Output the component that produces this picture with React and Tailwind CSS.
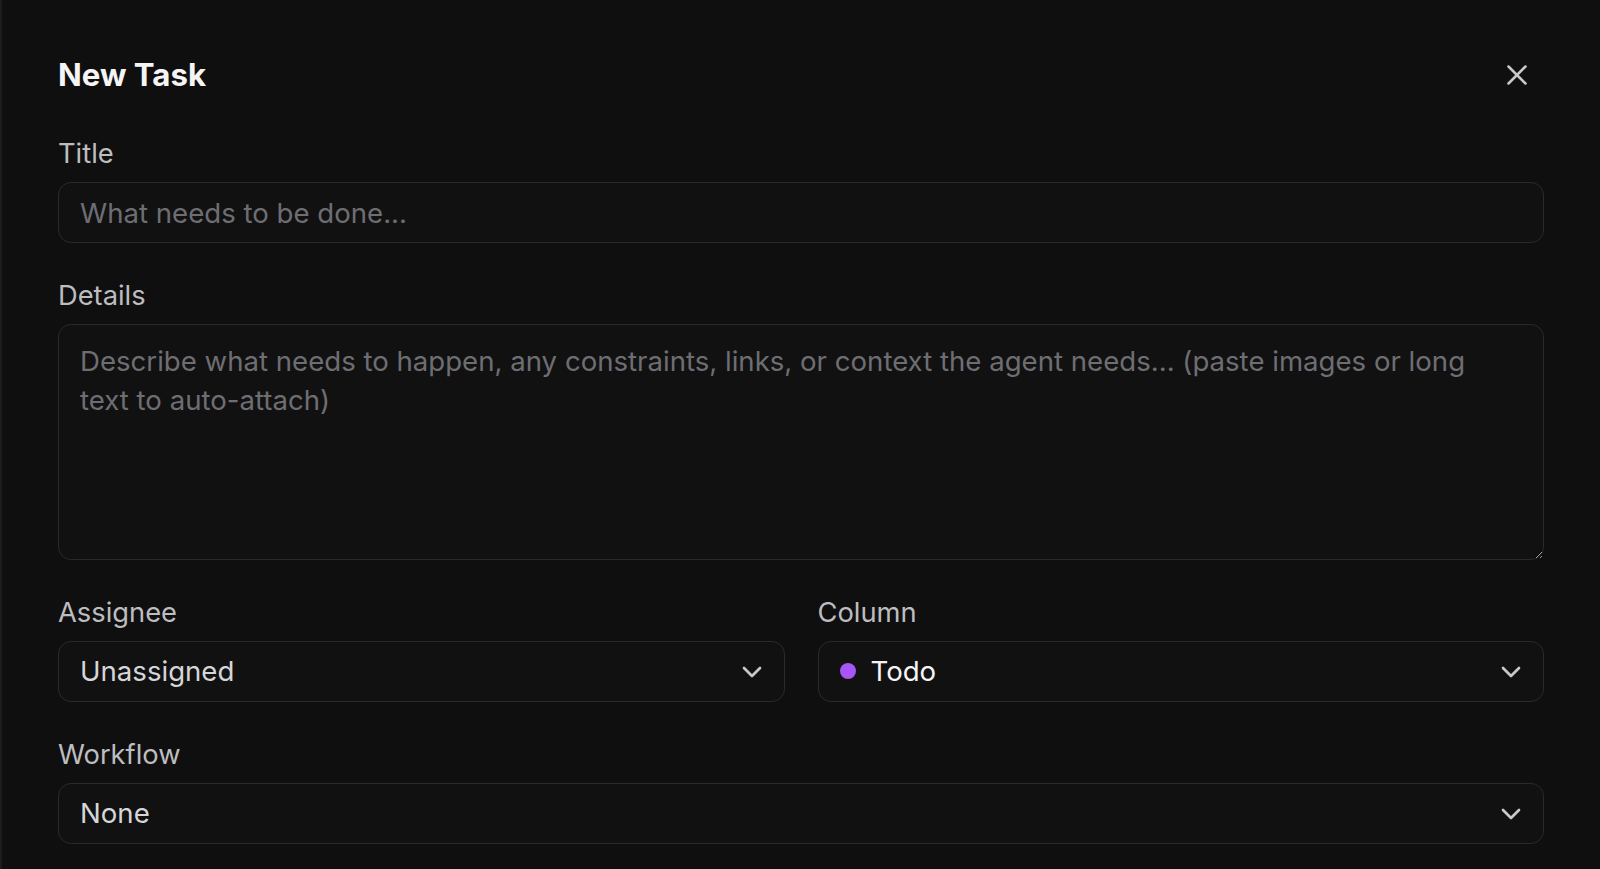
import { X, ChevronDown } from "lucide-react";

function Label({ children }) {
  return (
    <label className="block text-[27.3px] leading-[36px] text-[#bdbdbf] mb-[10px]">
      {children}
    </label>
  );
}

function Select({ children }) {
  return (
    <button
      type="button"
      className="w-full h-[61px] flex items-center justify-between pl-[21px] pr-[16px] bg-[#111112] border border-[#2a2a2d] rounded-[13px] text-left"
    >
      <span className="flex items-center">{children}</span>
      <ChevronDown size={32} strokeWidth={2} className="text-[#c9c9cb]" />
    </button>
  );
}

export default function App() {
  return (
    <div className="min-h-screen w-full bg-[#0f0f10] border-l-2 border-[#1c1c1f] font-['Inter',sans-serif] overflow-hidden">
      <div className="px-[56px] pt-[55px] pb-10">
        {/* header */}
        <div className="flex items-center justify-between h-[40px]">
          <h1 className="text-[31.2px] leading-[40px] font-bold text-[#f5f5f5]">New Task</h1>
          <button type="button" className="w-[54px] h-[54px] flex items-center justify-center text-[#c9c9cb]">
            <X size={34} strokeWidth={1.8} />
          </button>
        </div>

        <div className="mt-[41px]">
          <Label>Title</Label>
          <input
            type="text"
            placeholder="What needs to be done..."
            className="w-full h-[61px] px-[21px] bg-[#111112] border border-[#2a2a2d] rounded-[13px] text-[27.6px] text-[#e5e5e5] placeholder:text-[#6e6e72] outline-none"
          />
        </div>

        <div className="mt-[35px]">
          <Label>Details</Label>
          <textarea
            placeholder={"Describe what needs to happen, any constraints, links, or context the agent needs... (paste images or long\ntext to auto-attach)"}
            className="block w-full h-[236px] px-[21px] pt-[17px] bg-[#111112] border border-[#2a2a2d] rounded-[13px] text-[27.6px] leading-[39px] text-[#e5e5e5] placeholder:text-[#6e6e72] outline-none resize-y [color-scheme:dark]"
          />
        </div>

        <div className="mt-[35px] grid grid-cols-2 gap-[33px]">
          <div>
            <Label>Assignee</Label>
            <Select>
              <span className="text-[27.6px] text-[#d6d6d8]">Unassigned</span>
            </Select>
          </div>
          <div>
            <Label>Column</Label>
            <Select>
              <span className="w-[16px] h-[16px] rounded-full bg-[#a855f7] mr-[15px]" />
              <span className="text-[27.6px] text-[#f5f5f5]">Todo</span>
            </Select>
          </div>
        </div>

        <div className="mt-[35px]">
          <Label>Workflow</Label>
          <Select>
            <span className="text-[27.6px] text-[#d6d6d8]">None</span>
          </Select>
        </div>
      </div>
    </div>
  );
}
